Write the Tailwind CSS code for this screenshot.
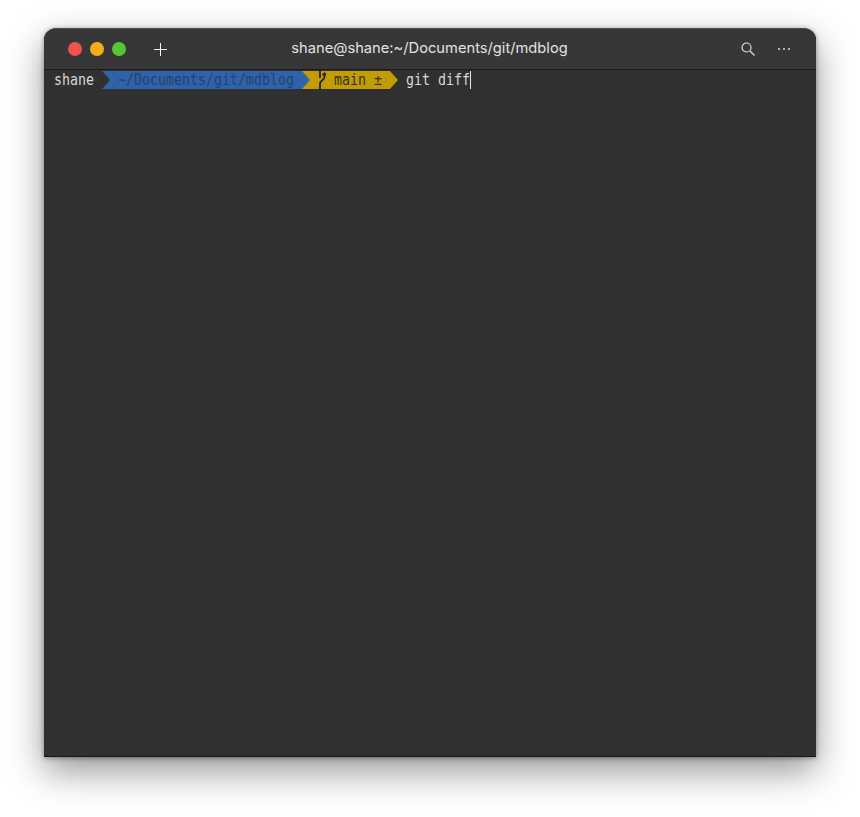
<!DOCTYPE html>
<html lang="en">
<head>
  <meta charset="UTF-8" />
  <title>shane@shane:~/Documents/git/mdblog</title>
  <script src="https://cdn.jsdelivr.net/npm/@tailwindcss/browser@4"></script>
</head>
<body class="bg-white h-[817px] w-[860px] overflow-hidden pt-[28px] pl-[44px]">
  <div class="w-[772px] h-[729px] flex flex-col bg-[#303030] rounded-t-[12px] shadow-[0_14px_36px_rgba(0,0,0,0.42),0_1px_5px_rgba(0,0,0,0.4)] border-t border-t-[#4a4a4a] border-b border-b-[#161616] overflow-hidden">
    <!-- title bar -->
    <header class="h-[41px] shrink-0 flex items-center bg-[#373737] border-b border-[#1c1c1c] pl-[24px] pr-[25px]">
      <div class="flex gap-[8px]">
        <span class="w-[14px] h-[14px] rounded-full bg-[#ee5350]"></span>
        <span class="w-[14px] h-[14px] rounded-full bg-[#f4ae1b]"></span>
        <span class="w-[14px] h-[14px] rounded-full bg-[#56c537]"></span>
      </div>
      <svg class="ml-[28px]" width="13" height="13" viewBox="0 0 13 13" fill="none" stroke="#f4f4f4" stroke-width="1"><path d="M6.5 0v13M0 6.5h13"/></svg>
      <h1 class="flex-1 text-center text-[14.7px] leading-[20px] mb-[2px] text-[#e2e2e2] font-['Inter',sans-serif] pr-[49px]">shane@shane:~/Documents/git/mdblog</h1>
      <svg width="14" height="14" viewBox="0 0 14 14" fill="none" stroke="#e0e0e0" stroke-width="1.2" class="mr-[22px]"><circle cx="5.5" cy="5.5" r="4.5"/><path d="M9 9l4.5 4.5"/></svg>
      <svg width="14" height="4" viewBox="0 0 14 4" fill="#dcdcdc"><circle cx="2" cy="2" r="1"/><circle cx="7" cy="2" r="1"/><circle cx="12" cy="2" r="1"/></svg>
    </header>
    <!-- prompt -->
    <div class="flex items-center h-[18px] mt-[1px] pl-[10px] font-['DejaVu_Sans_Mono',monospace] text-[13.3px] leading-[18px] whitespace-pre">
      <span class="w-[48px] text-[#d8d8d8]"><span class="inline-block scale-y-[1.14]">shane</span></span>
      <svg class="shrink-0" width="8" height="18" viewBox="0 0 8 18"><rect width="8" height="18" fill="#2f62a8"/><path d="M0 0l8 9-8 9z" fill="#303030"/></svg>
      <span class="w-[192px] h-[18px] pl-[8px] bg-[#2f62a8] text-[#24426c]"><span class="inline-block scale-y-[1.14]">~/Documents/git/mdblog</span></span>
      <svg class="shrink-0" width="8" height="18" viewBox="0 0 8 18"><rect width="8" height="18" fill="#c29c05"/><path d="M0 0l8 9-8 9z" fill="#2f62a8"/></svg>
      <span class="w-[80px] pl-[8px] bg-[#c29c05] text-[#37341b] flex items-center h-[18px]"><svg class="shrink-0 mr-[8px]" width="8" height="18" viewBox="0 0 8 18" fill="none" stroke="#26241a" stroke-width="1.8"><path d="M2 0v7M6.5 2v4c0 3-4.5 3-4.5 7v5"/><path d="M4.5 4.5L6.5 2l2 2.5" stroke-width="1.3"/></svg><span class="inline-block scale-y-[1.14]">main ±</span></span>
      <svg class="shrink-0" width="8" height="18" viewBox="0 0 8 18"><path d="M0 0l8 9-8 9z" fill="#c29c05"/></svg>
      <span class="pl-[8px] text-[#d8d8d8]"><span class="inline-block scale-y-[1.14]">git diff</span></span>
      <span class="w-[1px] h-[18px] bg-[#e8e8e8]"></span>
    </div>
  </div>
</body>
</html>
